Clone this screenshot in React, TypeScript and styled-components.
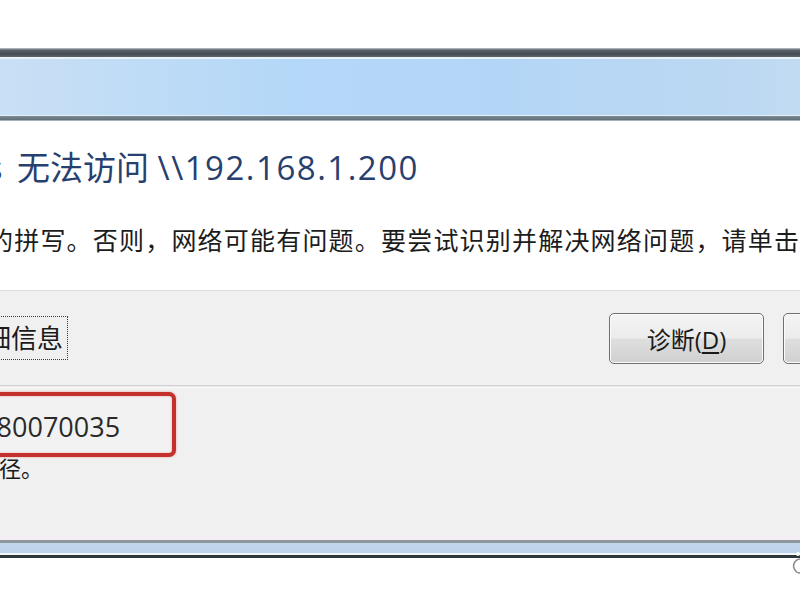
import React from 'react'
import styled, { createGlobalStyle } from 'styled-components'

const GlobalStyle = createGlobalStyle`
    html, body {
        margin: 0;
        padding: 0;
        background: #ffffff;
        overflow: hidden;
    }
    body {
        font-family: "Open Sans", "Noto Sans CJK SC", sans-serif;
        color: #1c1c1c;
    }
`;

const Page = styled.div`
    position: relative;
    width: 800px;
    height: 600px;
    overflow: hidden;
    padding-top: 48px;
    box-sizing: border-box;
    background: #ffffff;
`;

// the dialog is wider than the crop, so it starts left of the viewport
const Window = styled.div`
    margin-left: -160px;
    width: 1120px;
`;

const TitleBar = styled.div`
    height: 73px;
    background:
        linear-gradient(to bottom,
            #c6cacc 0px, #5a646a 2px, #424b50 6px, #5d676d 9px,
            #eaf2f8 9px, #eaf2f8 11px,
            transparent 11px, transparent 67px,
            #e6f0f8 67px, #e6f0f8 68px,
            #7d8b94 68px, #5f6e77 72px, #a7b2b9 72px),
        linear-gradient(to right,
            #d2e4f6 0%, #c6def5 18%, #b4d8f8 40%, #b4d6f6 60%, #bcd8f2 80%, #d0e2f4 100%);
`;

const Content = styled.div`
    height: 170px;
    padding: 26px 0 0 22px;
    box-sizing: border-box;
    background: #ffffff;
    border-bottom: 1px solid #dcdcdc;
`;

const MainInstruction = styled.h1`
    margin: 0;
    font-size: 33px;
    line-height: 42px;
    font-weight: 400;
    color: #27406f;
    white-space: nowrap;
`;

const Subject = styled.span`
    margin-left: 6px;
`;

const Address = styled.span`
    letter-spacing: 1.5px;
`;

const BodyText = styled.p`
    margin: 35px 0 0 -5px;
    font-size: 25px;
    line-height: 32px;
    letter-spacing: 1.2px;
    white-space: nowrap;
`;

const ActionRow = styled.div`
    height: 94px;
    padding: 0 22px 0 72px;
    box-sizing: border-box;
    display: flex;
    align-items: center;
    background: #f0f0f0;
`;

const DetailsToggle = styled.div`
    display: flex;
    align-items: center;
    gap: 14px;
`;

const Chevron = styled.span`
    display: flex;
    width: 28px;
    height: 28px;
    border-radius: 50%;
    border: 1px solid #8a8a8a;
    background: linear-gradient(#ffffff, #dcdcdc);
    align-items: center;
    justify-content: center;
`;

const FocusLabel = styled.span`
    padding: 6px 4px 6px 2px;
    border: 1px dotted #3a3a3a;
    font-size: 26px;
    line-height: 30px;
    color: #1a1a1a;
`;

const Buttons = styled.div`
    margin-left: auto;
    display: flex;
    gap: 19px;
`;

const Button = styled.button`
    width: 155px;
    height: 51px;
    border: 1px solid #707070;
    border-radius: 5px;
    box-shadow: inset 0 0 0 1px #fbfbfb;
    background: linear-gradient(to bottom, #f4f4f4 0%, #ececec 48%, #dedede 52%, #d0d0d0 100%);
    font-family: "Open Sans", "Noto Sans CJK SC", sans-serif;
    font-size: 24px;
    color: #1a1a1a;
    padding: 0;
    u {
        text-decoration-thickness: 2px;
        text-underline-offset: 3px;
    }
`;

const Divider = styled.div`
    height: 1px;
    border-top: 1px solid #d4d4d4;
    border-bottom: 1px solid #fbfbfb;
    background: #e6e6e6;
`;

const DetailPanel = styled.div`
    height: 152px;
    padding: 4px 0 0 0;
    box-sizing: border-box;
    background: #f0f0f0;
    border-bottom: 3px solid #f4eef4;
`;

const Annotated = styled.div`
    display: inline-block;
    margin-left: -26px;
    padding: 8px 52px 4px 14px;
    border: 4px solid #c4302b;
    border-radius: 7px;
    box-shadow: 0 0 2px rgba(220, 70, 70, 0.6), inset 0 0 2px rgba(220, 70, 70, 0.5);
    background: #f2f2f2;
`;

const ErrorCode = styled.div`
    font-size: 27px;
    line-height: 45px;
    color: #2a2a2a;
    white-space: nowrap;
`;

const ErrorText = styled.div`
    padding-left: 27px;
    font-size: 22px;
    line-height: 22px;
    color: #1a1a1a;
    white-space: nowrap;
`;

const BottomFrame = styled.div`
    height: 18px;
    background: linear-gradient(to bottom,
        #8c969d 0px, #8c969d 3px,
        #c3d7eb 3px, #bdd3ea 13px,
        #f0f5fa 13px, #f0f5fa 15px,
        #2f373b 15px, #2f373b 18px);
`;

const Curl = styled.svg`
    position: absolute;
    right: 0;
    top: 550px;
`;

export default function App() {
    return (
        <Page>
            <GlobalStyle />
            <Window>
                <TitleBar />
                <Content>
                    <MainInstruction>
                        Windows<Subject> 无法访问</Subject> <Address>\\192.168.1.200</Address>
                    </MainInstruction>
                    <BodyText>
                        请检查名称的拼写。否则，网络可能有问题。要尝试识别并解决网络问题，请单击“诊断”。
                    </BodyText>
                </Content>
                <ActionRow>
                    <DetailsToggle>
                        <Chevron>
                            <svg width="14" height="14" viewBox="0 0 14 14">
                                <path d="M3 5 L7 9 L11 5" fill="none" stroke="#333" strokeWidth="2" />
                            </svg>
                        </Chevron>
                        <FocusLabel>详细信息</FocusLabel>
                    </DetailsToggle>
                    <Buttons>
                        <Button>诊断(<u>D</u>)</Button>
                        <Button>取消</Button>
                    </Buttons>
                </ActionRow>
                <Divider />
                <DetailPanel>
                    <Annotated>
                        <ErrorCode>错误代码：0x80070035</ErrorCode>
                    </Annotated>
                    <ErrorText>找不到网络路径。</ErrorText>
                </DetailPanel>
                <BottomFrame />
            </Window>
            <Curl width="9" height="26" viewBox="0 0 9 26">
                <circle cx="7" cy="4" r="2" fill="#ffffff" />
                <path d="M9 9 C3 10, 1 16, 4 20 C5 22, 7 23, 9 23" fill="none" stroke="#8e8e8e" strokeWidth="1.6" />
            </Curl>
        </Page>
    )
}
